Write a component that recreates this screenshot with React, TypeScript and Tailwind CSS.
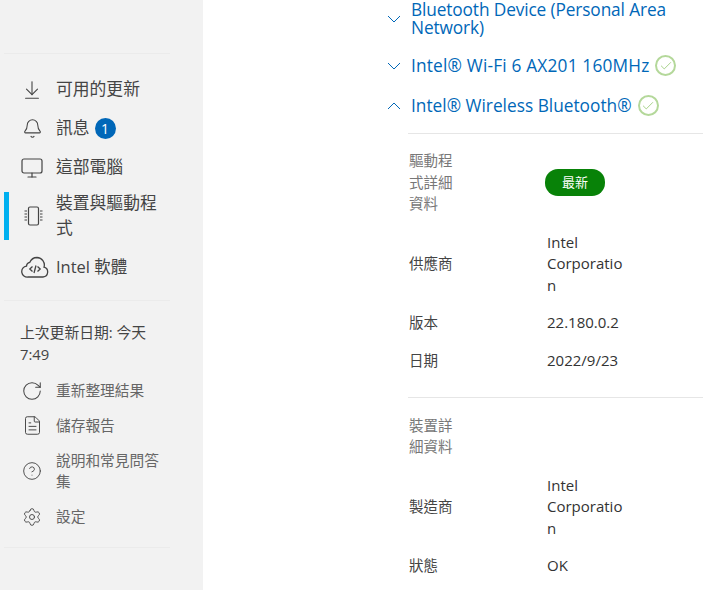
import { Check, ArrowDownToLine, Bell, Monitor, RotateCw, FileText, CircleHelp, Settings } from 'lucide-react';
import type { ReactNode } from 'react';

const font = { fontFamily: '"Open Sans", "Noto Sans CJK TC", sans-serif' };

function ChipIcon() {
  return (
    <svg width="20" height="20" viewBox="0 0 20 20" fill="none" stroke="#444" strokeWidth="1.2">
      <rect x="5.500" y="1" width="10" height="18" rx="1.500" />
      <path d="M1.500 5h2.500M1.500 8h2.500M1.500 11h2.500M1.500 14h2.500M17 5h2.500M17 8h2.500M17 11h2.500M17 14h2.500" />
    </svg>
  );
}

function CloudIcon() {
  return (
    <svg width="28" height="23" viewBox="0 0 28 23" fill="none" stroke="#444" strokeWidth="1.300">
      <path d="M7 21h15a5 5 0 0 0 1-9.800A7.500 7.500 0 0 0 16 1.500a8 8 0 0 0-7.200 4.800 4 4 0 0 0-3.300 3.800A5.500 5.500 0 0 0 7 21z" />
      <path d="M11.500 10.500 8.800 13l2.700 2.500M16.500 10.500l2.700 2.500-2.700 2.500M15 9.500l-2 7.500" />
    </svg>
  );
}

function Chevron({ up }: { up?: boolean }) {
  return (
    <svg width="14" height="8" viewBox="0 0 14 8" fill="none" stroke="#0067b8" strokeWidth="1" className={up ? 'rotate-180' : ''}>
      <path d="M1 1l6 6 6-6" />
    </svg>
  );
}

function NavItem({ icon, children, badge }: { icon: ReactNode; children: ReactNode; badge?: string }) {
  return (
    <div className="flex items-center h-[39px]">
      <div className="w-[56px] flex justify-center pl-[8px] shrink-0">{icon}</div>
      <span className="text-[16.800px] text-[#444] -mt-[2px]">{children}</span>
      {badge && (
        <span className="ml-[5px] w-[21px] h-[21px] rounded-full bg-[#0067b8] text-white text-[14px] flex items-center justify-center">
          {badge}
        </span>
      )}
    </div>
  );
}

function SubItem({ icon, children, tall }: { icon: ReactNode; children: ReactNode; tall?: boolean }) {
  return (
    <div className={`flex items-center ${tall ? 'h-[56px]' : 'h-[35px]'}`}>
      <div className="w-[56px] flex justify-center pl-[8px] shrink-0">{icon}</div>
      <span className="text-[14.700px] leading-[21px] text-[#666] w-[112px]">{children}</span>
    </div>
  );
}

function Device({ name, open, check, twoLine, textClass }: { name: string; open?: boolean; check?: boolean; twoLine?: boolean; textClass?: string }) {
  return (
    <div className={`flex items-center -ml-[1px] ${twoLine ? 'h-[36px] mb-[18px]' : 'h-[21px] mb-[19px]'}`}>
      <div className="w-[24px] shrink-0 flex justify-start">
        <Chevron up={open} />
      </div>
      <span className={`text-[17.300px] leading-[18px] text-[#0067b8] whitespace-pre-line ${textClass ?? ''}`}>{name}</span>
      {check && (
        <span className="ml-[6px] w-[21px] h-[21px] rounded-full border-2 border-[#b4d89a] flex items-center justify-center shrink-0">
          <Check size={14} strokeWidth={1.500} className="text-[#9ccb7a]" />
        </span>
      )}
    </div>
  );
}

function Row({ label, children, className }: { label: string; children: ReactNode; className?: string }) {
  return (
    <div className={`flex items-center ${className ?? ''}`}>
      <span className="w-[138px] text-[14.500px] text-[#444] shrink-0">{label}</span>
      <span className="w-[78px] text-[15px] leading-[21.500px] text-[#333] break-words">{children}</span>
    </div>
  );
}

export default function App() {
  return (
    <div className="flex w-[720px] h-[590px] overflow-hidden bg-white" style={font}>
      {/* Sidebar */}
      <div className="w-[203px] h-full bg-[#f2f2f2] shrink-0 pt-[53px]">
        <div className="ml-[4px] w-[166px] h-px bg-[#ebebeb]" />
        <div className="pt-[16px]">
          <NavItem icon={<ArrowDownToLine size={22} strokeWidth={1.200} color="#444" />}>可用的更新</NavItem>
          <NavItem icon={<Bell size={21} strokeWidth={1.200} color="#444" />} badge="1">訊息</NavItem>
          <NavItem icon={<Monitor size={24} strokeWidth={1.200} color="#444" />}>這部電腦</NavItem>
          <div className="flex items-center h-[48px] mt-[5px] border-l-[5px] border-[#00b0f0] ml-[4px]">
            <div className="w-[47px] flex justify-center shrink-0"><ChipIcon /></div>
            <span className="text-[16.800px] leading-[25px] text-[#444] w-[106px] -mt-[2px]">裝置與驅動程式</span>
          </div>
          <div className="flex items-center h-[40px] mt-[7px]">
            <div className="w-[56px] flex justify-start pl-[21px] shrink-0"><CloudIcon /></div>
            <span className="text-[16.500px] text-[#444]">Intel 軟體</span>
          </div>
        </div>
        <div className="ml-[4px] mt-[13px] w-[166px] h-px bg-[#ebebeb]" />
        <div className="pl-[20px] pt-[21px] w-[165px] text-[14.800px] leading-[21.500px] text-[#444]">上次更新日期: 今天 7:49</div>
        <div className="pt-[8px]">
          <SubItem icon={<RotateCw size={22} strokeWidth={1.100} color="#444" />}>重新整理結果</SubItem>
          <SubItem icon={<FileText size={21} strokeWidth={1.100} color="#444" />}>儲存報告</SubItem>
          <SubItem tall icon={<CircleHelp size={20} strokeWidth={1.100} color="#444" />}>說明和常見問答集</SubItem>
          <SubItem icon={<Settings size={20} strokeWidth={1.100} color="#444" />}>設定</SubItem>
        </div>
        <div className="ml-[4px] mt-[13px] w-[166px] h-px bg-[#ebebeb]" />
      </div>
      {/* Device list */}
      <div className="flex-1 pl-[185px] pt-[1px]">
        <Device name={'Bluetooth Device (Personal Area\nNetwork)'} twoLine textClass="tracking-[-0.130px]" />
        <Device name="Intel® Wi-Fi 6 AX201 160MHz" check textClass="tracking-[0.180px]" />
        <Device name="Intel® Wireless Bluetooth®" open check />
        <div className="ml-[20px] w-[295px]">
          <div className="h-px bg-[#e6e6e6] -mt-[2px]" />
          <div className="pt-[16px] pb-[17px] flex items-center pl-[1px]">
            <span className="w-[46px] mr-[90px] text-[14.500px] leading-[21.500px] text-[#777]">驅動程式詳細資料</span>
            <span className="w-[60px] h-[27px] rounded-[13px] bg-[#088208] text-white text-[13px] flex items-center justify-center">最新</span>
          </div>
          <div className="pl-[1px]">
            <Row label="供應商" className="pb-[16px]">Intel Corporation</Row>
            <Row label="版本" className="pb-[16px]">22.180.0.2</Row>
            <Row label="日期">2022/9/23</Row>
          </div>
          <div className="h-px bg-[#e6e6e6] mt-[25px]" />
          <div className="pt-[17px] pb-[17px] pl-[1px]">
            <span className="block w-[46px] text-[14.500px] leading-[21.500px] text-[#777]">裝置詳細資料</span>
          </div>
          <div className="pl-[1px]">
            <Row label="製造商" className="pb-[16px]">Intel Corporation</Row>
            <Row label="狀態">OK</Row>
          </div>
        </div>
      </div>
    </div>
  );
}
